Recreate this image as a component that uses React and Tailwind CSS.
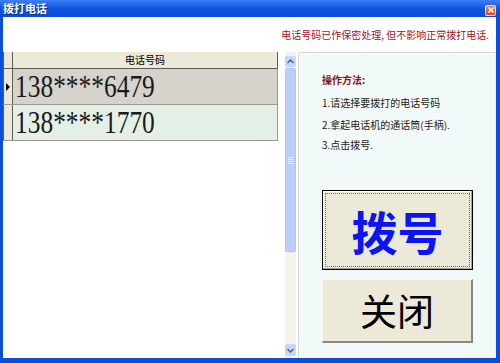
import React, { useState } from 'react'

const numbers = ['138****6479', '138****1770']

const App = () => {
    const [selected, setSelected] = useState(0)

    return (
        <div className="w-[500px] h-[363px] flex flex-col bg-[#0a4fd9] font-['Noto_Sans_CJK_SC',sans-serif] overflow-hidden">
            {/* title bar */}
            <div className="h-[17px] flex items-center justify-between pl-[3px] pr-[4px] bg-gradient-to-b from-[#3d7ff5] via-[#0b54e0] to-[#0a4bd6]">
                <span className="text-white text-[11px] font-bold leading-none [text-shadow:1px_1px_0_#0a2f8a]">拨打电话</span>
                <div className="w-[11px] h-[11px] mt-[3px] rounded-[2px] border border-white/80 bg-gradient-to-b from-[#f08a5a] to-[#d9431c] flex items-center justify-center">
                    <svg width="6" height="6" viewBox="0 0 6 6">
                        <path d="M0.5 0.5 L5.5 5.5 M5.5 0.5 L0.5 5.5" stroke="#fff" strokeWidth="1.5" />
                    </svg>
                </div>
            </div>

            <div className="flex-1 ml-[3px] mr-[4px] mb-[5px] bg-white flex flex-col">
                {/* notice */}
                <div className="h-[35px] flex items-center justify-end pr-[7px]">
                    <span className="text-[#a8141b] text-[10px] leading-none">电话号码已作保密处理, 但不影响正常拨打电话.</span>
                </div>

                <div className="flex-1 flex">
                    {/* grid */}
                    <div className="w-[283px] flex flex-col">
                        <div className="flex w-[275px] h-[17px] bg-[#ece9d8] border-b border-[#5f5d55]">
                            <div className="w-[10px] border-x border-[#5f5d55]"></div>
                            <div className="flex-1 flex items-center justify-center border-r border-[#5f5d55] text-[10px] text-black leading-none">电话号码</div>
                        </div>
                        {numbers.map((num, i) => (
                            <div key={i} onClick={() => setSelected(i)} className="flex w-[275px] h-[36px] border-b border-[#9c9a90] cursor-pointer">
                                <div className="w-[10px] bg-[#ece9d8] border-x border-[#5f5d55] flex items-center justify-center">
                                    {selected === i && (
                                        <svg width="4" height="8" viewBox="0 0 4 8">
                                            <path d="M0 0 L4 4 L0 8 Z" fill="#000" />
                                        </svg>
                                    )}
                                </div>
                                <div className={`flex-1 flex items-center pl-[2px] border-r border-[#9c9a90] ${selected === i ? 'bg-[#d6d3cd]' : 'bg-[#e4f0e6]'}`}>
                                    <span className="font-['Liberation_Serif',serif] text-[31px] leading-none text-[#1a1a1a] scale-x-[0.82] origin-left inline-block">{num}</span>
                                </div>
                            </div>
                        ))}
                    </div>

                    {/* scrollbar */}
                    <div className="w-[11px] flex flex-col bg-[#f4f3ee] pt-[4px] pb-[2px]">
                        <div className="h-[11px] rounded-[2px] bg-[#c5d6fb] flex items-center justify-center">
                            <svg width="7" height="5" viewBox="0 0 7 5">
                                <path d="M0.5 4 L3.5 1 L6.5 4" stroke="#4d6185" strokeWidth="1.5" fill="none" />
                            </svg>
                        </div>
                        <div className="h-[184px] mt-[1px] rounded-[2px] bg-[#bccffa] border border-[#aec3f3] flex items-center justify-center">
                            <div className="w-[5px] flex flex-col gap-[1px]">
                                <div className="h-px bg-[#eef3fe]"></div>
                                <div className="h-px bg-[#eef3fe]"></div>
                                <div className="h-px bg-[#eef3fe]"></div>
                                <div className="h-px bg-[#eef3fe]"></div>
                            </div>
                        </div>
                        <div className="flex-1"></div>
                        <div className="h-[12px] rounded-[2px] bg-[#c5d6fb] flex items-center justify-center">
                            <svg width="7" height="5" viewBox="0 0 7 5">
                                <path d="M0.5 1 L3.5 4 L6.5 1" stroke="#4d6185" strokeWidth="1.5" fill="none" />
                            </svg>
                        </div>
                    </div>

                    {/* instructions + buttons */}
                    <div className="flex-1 ml-[2px] border-l border-t border-[#d8d8d2] bg-[#f1f9f9] flex flex-col pl-[23px] pr-[23px]">
                        <div className="mt-[22px] text-[10px] font-bold text-[#8b1010] leading-none">操作方法:</div>
                        <div className="mt-[13px] text-[10px] text-[#222] leading-none">1.请选择要拨打的电话号码</div>
                        <div className="mt-[12px] text-[10px] text-[#222] leading-none">2.拿起电话机的通话筒(手柄).</div>
                        <div className="mt-[10px] text-[10px] text-[#222] leading-none">3.点击拨号.</div>

                        <button className="mt-[40px] w-[151px] h-[80px] border border-black bg-[#ece9d8] p-[2px] shadow-[inset_-1px_-1px_0_#aca899,inset_1px_1px_0_#fff]">
                            <div className="w-full h-full border border-dotted border-[#6b6a5c] flex items-center justify-center">
                                <span className="text-[46px] font-bold text-[#0a14f5] leading-none">拨号</span>
                            </div>
                        </button>

                        <button className="mt-[9px] w-[151px] h-[64px] border-t border-l border-[#f7f6f1] border-r-[2px] border-b-[2px] border-r-[#8a887c] border-b-[#8a887c] bg-[#ece9d8] flex items-center justify-center">
                            <span className="text-[37px] text-black leading-none">关闭</span>
                        </button>
                    </div>
                </div>
            </div>
        </div>
    )
}

export default App
